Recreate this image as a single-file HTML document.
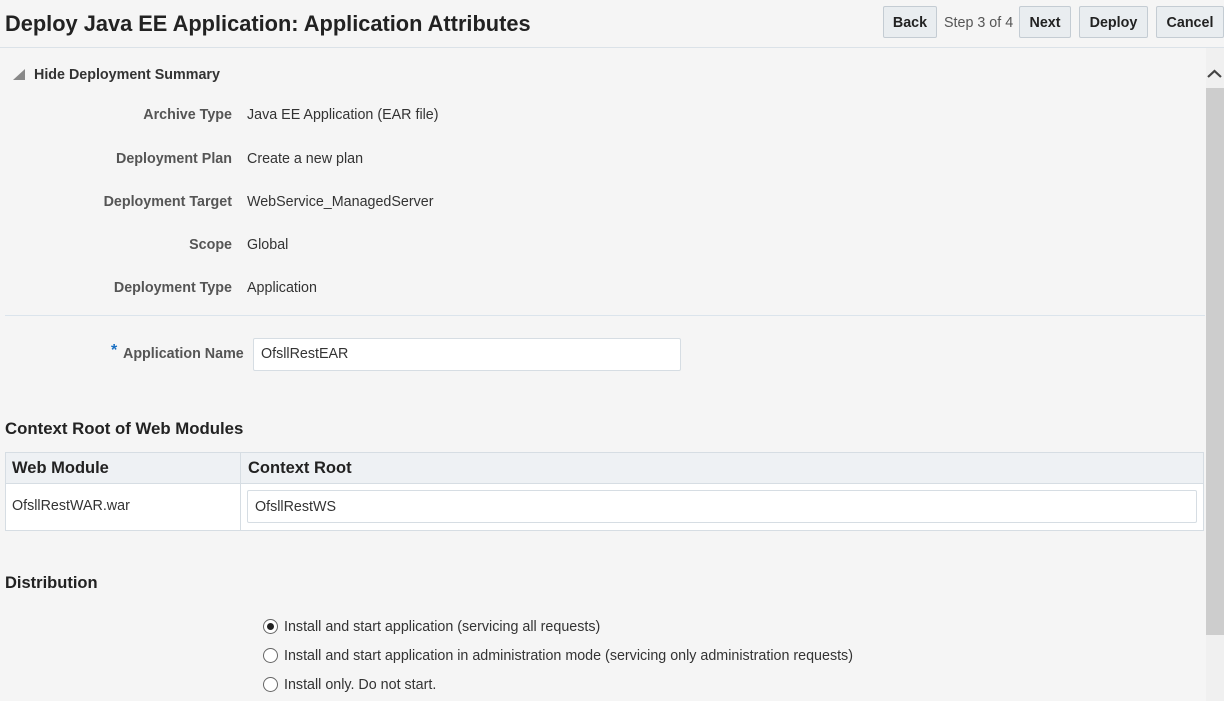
<!DOCTYPE html>
<html><head><style>
body{margin:0;width:1224px;height:701px;background:#f5f5f5;font-family:"Liberation Sans",Arial,sans-serif;color:#333;position:relative;overflow:hidden;font-size:14.3px}
.a{position:absolute;white-space:nowrap}
.btn{position:absolute;top:6px;height:32px;border:1px solid #c4ccd3;background:#e9edf0;border-radius:2px;font-weight:bold;color:#222;font-size:14.3px;line-height:32px;text-align:center;box-sizing:border-box}
.lbl{position:absolute;right:992px;font-weight:bold;color:#555;font-size:14.3px;white-space:nowrap}
.val{position:absolute;left:247px;font-size:14.3px;color:#333;white-space:nowrap}
.radio{position:absolute;left:263px;width:13px;height:13px;border:1px solid #666;border-radius:50%;background:#fff}
</style></head><body>
<div class="a" style="left:5px;top:11px;font-size:21.8px;font-weight:bold;color:#222">Deploy Java EE Application: Application Attributes</div>
<div class="btn" style="left:883px;width:54px">Back</div>
<div class="a" style="left:944px;top:15px;color:#555">Step 3 of 4</div>
<div class="btn" style="left:1019px;width:52px">Next</div>
<div class="btn" style="left:1079px;width:69px">Deploy</div>
<div class="btn" style="left:1156px;width:68px">Cancel</div>
<div class="a" style="left:0;top:47px;width:1224px;height:1px;background:#dbe2e8"></div>
<div class="a" style="left:1206px;top:48px;width:18px;height:653px;background:#f0f0f0"></div>
<div class="a" style="left:1206px;top:88px;width:18px;height:547px;background:#cdcdcd"></div>
<svg class="a" style="left:1207px;top:68px" width="15" height="12"><path d="M1 9 L7.5 3 L14 9" stroke="#444" stroke-width="2.2" fill="none"/></svg>
<svg class="a" style="left:12px;top:68px" width="14" height="14"><path d="M1 12 L13 12 L13 1 Z" fill="#888"/></svg>
<div class="a" style="left:34px;top:67px;font-weight:bold;color:#333;font-size:14.3px">Hide Deployment Summary</div>
<div class="lbl" style="top:107px">Archive Type</div><div class="val" style="top:107px">Java EE Application (EAR file)</div>
<div class="lbl" style="top:151px">Deployment Plan</div><div class="val" style="top:151px">Create a new plan</div>
<div class="lbl" style="top:194px">Deployment Target</div><div class="val" style="top:194px">WebService_ManagedServer</div>
<div class="lbl" style="top:237px">Scope</div><div class="val" style="top:237px">Global</div>
<div class="lbl" style="top:280px">Deployment Type</div><div class="val" style="top:280px">Application</div>
<div class="a" style="left:5px;top:315px;width:1200px;height:1px;background:#dbe4ec"></div>
<div class="a" style="left:111px;top:342px;color:#1a6fc2;font-weight:bold;font-size:16px">*</div>
<div class="a" style="left:123px;top:346px;font-weight:bold;color:#555">Application Name</div>
<div class="a" style="left:253px;top:338px;width:426px;height:31px;border:1px solid #d6dde3;background:#fff;border-radius:2px"></div>
<div class="a" style="left:261px;top:346px;color:#333">OfsllRestEAR</div>
<div class="a" style="left:5px;top:419px;font-weight:bold;font-size:16.8px;color:#222">Context Root of Web Modules</div>
<div class="a" style="left:5px;top:452px;width:1199px;height:79px;border:1px solid #d6dde3;background:#fff;box-sizing:border-box"></div>
<div class="a" style="left:6px;top:453px;width:1197px;height:30px;background:#eef1f4;border-bottom:1px solid #d6dde3"></div>
<div class="a" style="left:240px;top:453px;width:1px;height:77px;background:#d6dde3"></div>
<div class="a" style="left:12px;top:459px;font-weight:bold;font-size:16.5px;color:#222">Web Module</div>
<div class="a" style="left:248px;top:459px;font-weight:bold;font-size:16.5px;color:#222">Context Root</div>
<div class="a" style="left:12px;top:498px;color:#333">OfsllRestWAR.war</div>
<div class="a" style="left:247px;top:490px;width:950px;height:33px;border:1px solid #d6dde3;background:#fff;border-radius:2px;box-sizing:border-box"></div>
<div class="a" style="left:255px;top:499px;color:#333">OfsllRestWS</div>
<div class="a" style="left:5px;top:574px;font-weight:bold;font-size:16.5px;color:#222">Distribution</div>
<div class="radio" style="top:619px"></div><div class="a" style="left:267px;top:623px;width:7px;height:7px;border-radius:50%;background:#222"></div>
<div class="a" style="left:284px;top:619px">Install and start application (servicing all requests)</div>
<div class="radio" style="top:648px"></div>
<div class="a" style="left:284px;top:648px">Install and start application in administration mode (servicing only administration requests)</div>
<div class="radio" style="top:677px"></div>
<div class="a" style="left:284px;top:677px">Install only. Do not start.</div>
</body></html>
